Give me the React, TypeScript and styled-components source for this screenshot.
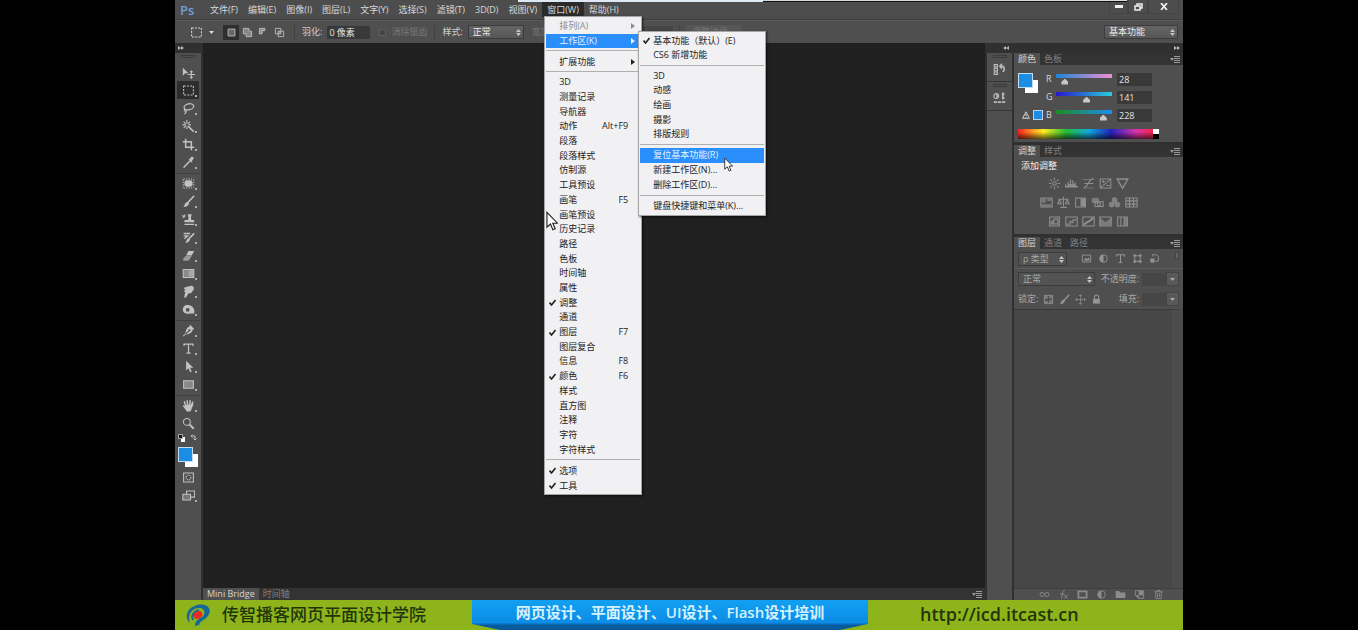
import React from "react";
import styled, { createGlobalStyle, css } from "styled-components";

const Global = createGlobalStyle`
  * { box-sizing: border-box; }
  body { margin: 0; background: #000; }
  body, button, input, select {
    font-family: "Open Sans", "Noto Sans CJK SC", sans-serif;
    font-size: 9px;
    line-height: 12px;
    color: #d8d8d8;
  }
  button, input, select { margin: 0; padding: 0; border: 0; background: none; }
  svg { display: block; flex: none; }
`;

/* ---------- icons ---------- */

const Svg = ({ size = 14, children }: { size?: number; children: React.ReactNode }) => (
  <svg width={size} height={size} viewBox="0 0 16 16" fill="none" stroke="currentColor" strokeWidth="1.3">
    {children}
  </svg>
);

const f = { fill: "currentColor", stroke: "none" };

const icons: Record<string, React.ReactNode> = {
  move: <><path {...f} d="M1 2v10l3-3h4z" /><path d="M11.500 6v9M7 10.500h9M10 7.500l1.500-1.500 1.500 1.500M10 13.500l1.500 1.500 1.500-1.500" /></>,
  marquee: <path strokeDasharray="2.500 1.500" d="M2 2.500h12v11H2z" />,
  lasso: <><ellipse cx="8.500" cy="6" rx="6" ry="3.700" strokeWidth="1.600" transform="rotate(-12 8 6)" /><path d="M4 8.500c-2 1-1.500 3 .5 2.500S5 13 3 15" /></>,
  wand: <><path strokeWidth="2" d="M7.500 7.500l7 7" /><path d="M6 0v4M6 8v3M0.500 6h4M8 6h3M2 2l3 3M10 2L7 5M2 10l3-3" /></>,
  crop: <path strokeWidth="1.800" d="M4.500 1v10.500H15M1 4.500h10.500V15" />,
  dropper: <><path {...f} d="M9 4l2-2.500c1-1 3.500-.5 3.500 1.500L12 6l1 1-1.500 1L8 4.500z" /><path strokeWidth="1.800" d="M9.500 6.500l-6 6L2 14.500" /></>,
  patch: <><rect {...f} x="3" y="4" width="10" height="8" rx="3" /><path strokeDasharray="1.500 1.500" d="M2 2.500h12M2 13.500h12M1.500 3v10M14.500 3v10" /></>,
  brush: <><path strokeWidth="2" d="M15 1L7 9.500" /><path {...f} d="M7 8.500l1.500 1.500c0 3-3 4.500-7.500 4.500 3-1 2-6 6-6z" /></>,
  stamp: <><path {...f} d="M7 1.500h5l-1 4 .5 3H15v3H3v-3h4.500l.5-3z" /><path d="M3 14h12M0 3l4 2M1 6l3-4" /></>,
  history: <><path strokeWidth="2" d="M15 3l-6 6" /><path {...f} d="M9 8.500l1 1.500c-1 3-3 4.500-6 4.500 2-1.500 1-5.500 5-6z" /><path d="M2 3h8M2 6h5L3 9.500" strokeWidth="1.700" /></>,
  eraser: <><path {...f} d="M8 2.500h7L12 8H5z" /><path {...f} opacity=".65" d="M4.500 8.500H12l-4 6H1.500V12z" /></>,
  gradient: <><rect {...f} x="1.500" y="3" width="13" height="10" opacity=".35" /><rect {...f} x="2" y="4" width="6" height="8" opacity=".25" /><rect {...f} x="8" y="4" width="6" height="8" opacity=".65" /><path d="M1.500 3h13v10h-13z" /></>,
  smudge: <path {...f} d="M3 3l8-2c3 0 4 2 3.500 4.500L11 10H8L5 15.500H2.500L4 9 2 7l3-1-2.500-1z" />,
  dodge: <path {...f} fillRule="evenodd" d="M1 8C1 1 11 1 14 6c2 3 1 6 1 7h-4C6 14 1 13 1 8zm4-1.500v4h4v-4z" />,
  pen: <><path {...f} d="M10 1l5 5-2 1c0 3-4 5.500-8 6l4-4a1.300 1.300 0 10-1-1l-4 4c.5-4 2-8 5-9z" /><path d="M1.500 15l3-3" /></>,
  type: <path strokeWidth="1.500" d="M2.500 5V2.500h11V5M8 2.500v11M5.500 13.800h5" />,
  arrow: <path {...f} d="M5 1v12l3-3 2 5 2-1-2-4.500h4z" />,
  rect: <><rect {...f} x="2" y="3.500" width="12" height="9" opacity=".5" /><path d="M2 3.500h12v9H2z" /></>,
  hand: <><path {...f} d="M4.500 10V7h7v-1l3-.5-2 5-2 5H6L1 8.500C1 7 3 8 4.500 10z" /><path strokeWidth="1.800" strokeLinecap="round" d="M4.500 9L3 3.500M7 8l-.7-6M9.500 8L10 2M11.800 8L13 4" /></>,
  zoom: <><circle cx="6" cy="6" r="4.200" /><path strokeWidth="2.400" d="M9.500 9.500l5 5" /></>,
  mask: <><path d="M2 2.500h12v11H2z" /><circle cx="8" cy="8" r="3" strokeDasharray="1.500 1" /></>,
  screen: <><path d="M5.500 2.500h10v7.500h-10z" /><path d="M1 6.500h9.500v7H1z" fill="#777" /></>,
  newSel: <><rect {...f} x="3" y="3" width="10" height="10" opacity=".4" /><path d="M3 3h10v10H3z" /></>,
  addSel: <><path {...f} opacity=".5" d="M2 2h8v4h4v8H6v-4H2z" /><path d="M2 2h8v4h4v8H6v-4H2z" /></>,
  subSel: <><path {...f} d="M2 2h8v4H6v4H2z" opacity=".6" /><path d="M2 2h8v3H6v5H2z" /></>,
  intSel: <><path d="M2 2h8v8H2zM6 6h8v8H6z" /><rect {...f} x="6" y="6" width="4" height="4" opacity=".5" /></>,
  sun: <><circle cx="8" cy="8" r="2.200" /><path d="M8 1v3M8 12v3M1 8h3M12 8h3M3 3l2 2M11 11l2 2M13 3l-2 2M5 11l-2 2" /></>,
  levels: <path {...f} d="M0 13V9h1.500v2H3V6h1.500v3H6V3h1.500v6H9V4h1.500v5H12V7h1.500v4H16v2z" />,
  curves: <><path d="M1 13.500h14M1 3h14" opacity=".6" /><path d="M2 13C8 13 7 3 14 2M3 8h11" /></>,
  exposure: <path d="M1.500 2.500h13v11h-13zM2 13L14 3M3.500 5.500h4M5.500 4v3M9 10.500h4" />,
  vibrance: <path d="M1.500 2.500h13L8 14z" strokeWidth="1.700" />,
  hue: <><path d="M1 2.500h14v11H1z" /><path {...f} d="M2 3h5v5H2zM9 3h5v3H9zM2 10h12v3H2z" opacity=".7" /></>,
  balance: <path d="M8 1v12M4 14h8M2 4h12M1 9.500l2-5 2.500 5zM10.500 9.500l2-5 2.500 5z" />,
  bw: <><path d="M2 2.500h12v11H2z" /><path {...f} d="M8 3h6v10H8z" /></>,
  photo: <><rect {...f} x="1" y="2" width="9" height="7" rx="2" opacity=".7" /><path d="M5 7h10v6H5z" /><circle cx="10" cy="10" r="2" /></>,
  mixer: <><circle {...f} cx="8" cy="5" r="3.500" opacity=".8" /><circle {...f} cx="4.500" cy="10.500" r="3.500" opacity=".8" /><circle {...f} cx="11.500" cy="10.500" r="3.500" opacity=".8" /></>,
  lookup: <path d="M1 2.500h14v11H1zM1 6h14M1 10h14M5.500 2.500v11M10.500 2.500v11" />,
  invert: <><path d="M2 2.500h12v11H2z" /><path {...f} fillRule="evenodd" d="M3 12V8L8 4h5v8zM8 6v4h3V6z" opacity=".8" /></>,
  poster: <><path d="M1 2.500h14v11H1z" /><path {...f} d="M2 13v-3h3V7h4V5h5v2h-3v3H7v3z" opacity=".7" /></>,
  threshold: <><path d="M1 2.500h14v11H1z" /><path strokeWidth="2.600" d="M2 12l4-3 4-2 4-4" /></>,
  selective: <><path d="M1 2.500h14v11H1z" /><path {...f} d="M1 3l7 6 7-6v10H1z" opacity=".7" /></>,
  gradmap: <><path d="M2 2.500h12v11H2zM6 3v10M10 3v10" /><path {...f} d="M10 3h4v10h-4z" opacity=".7" /></>,
  image: <><path d="M2 3h12v10H2z" /><path {...f} d="M4 11l3-4 2 2 2-3 2 5z" /></>,
  half: <><circle cx="8" cy="8" r="5.500" /><path {...f} d="M8 2.500a5.500 5.500 0 010 11z" transform="rotate(180 8 8)" /></>,
  shape: <><path d="M4 4h8v8H4z" /><path {...f} d="M2 2h4v3H2zM10 2h4v3h-4zM2 11h4v3H2zM10 11h4v3h-4z" /></>,
  smart: <><path d="M5 5V2.500h6l2.500 2.500v7H9" /><path {...f} d="M2 8h6v6H2z" /></>,
  grid: <><path d="M2 2h12v12H2z" /><path {...f} d="M3 3h4v4H3zM9 9h4v4H9zM9 3h4v3H9zM3 10h4v3H3z" opacity=".7" /></>,
  cross: <path strokeDasharray="3 1" d="M8 1v14M1 8h14M6 3l2-2 2 2M6 13l2 2 2-2M3 6L1 8l2 2M13 6l2 2-2 2" />,
  lock: <><rect {...f} x="3" y="7" width="10" height="7" /><path strokeWidth="1.600" d="M5 7V4.500a3 3 0 016 0V7" /></>,
  link: <><circle cx="4.500" cy="8" r="3" /><circle cx="11.500" cy="8" r="3" /></>,
  fx: <path d="M10 2C6 1 7 7 5 14M3 7h6M9 8l5 6M14 8l-5 6" />,
  maskAdd: <path strokeWidth="2.500" d="M2 3.500h12v9H2z" />,
  folder: <path {...f} d="M1 3h5l1.500 2H15v8H1z" />,
  page: <><path d="M2 2.500h12v11H7L2 9z" /><path {...f} d="M2 9h5v5zM7 3h6v6H7z" /></>,
  trash: <path d="M2 4h12M6 4V2h4v2M4 4v10h8V4M6.500 6v6M9.500 6v6" />,
  histPanel: <><path d="M1.500 2h4v3h-4zM1.500 6.500h4v3h-4zM1.500 11h4v3h-4z" /><path strokeWidth="2" d="M9 4h3c3 2 2 5 0 7M11 1L8.500 4 11 7" /></>,
  propPanel: <><circle cx="4" cy="5" r="3" /><path {...f} d="M4 2l3 3-3 3zM11 1h3v3h-1v2h1v3h-3z" /><path strokeWidth="2" strokeDasharray="4 1" d="M1 12.500h14" /></>,
};

const Icon = ({ name, size }: { name: string; size?: number }) => <Svg size={size}>{icons[name]}</Svg>;

/* ---------- shell ---------- */

const Page = styled.div`
  display: flex;
  flex-direction: column;
  min-height: 100vh;
  margin: 0 175px;
  background: #4f4f4f;
  position: relative;
`;

const BackWindow = styled.div`
  position: absolute;
  top: 0;
  left: 343px;
  right: 56px;
  height: 2px;
  display: flex;
  border-bottom: 1px solid #111;
  background: #d4dcd8;
  &::before { content: ""; width: 245px; height: 2px; background: #dfe9f6; }
`;

const MenuBar = styled.nav`
  display: flex;
  align-items: center;
  height: 20px;
  padding-left: 5px;
  background: #4d4d4d;
  border-bottom: 1px solid #3f3f3f;
`;

const Logo = styled.span`
  width: 25px;
  font-size: 13px;
  font-weight: 600;
  line-height: 18px;
  color: #6f9fdc;
`;

const MenuSlot = styled.div`position: relative;`;

const MenuButton = styled.button<{ $open?: boolean }>`
  height: 15px;
  padding: 0 5px;
  white-space: nowrap;
  background: ${(p) => (p.$open ? "#2b2b2b" : "none")};
`;

const WindowButtons = styled.div`
  display: flex;
  align-items: center;
  margin-left: auto;
  padding-right: 4px;
  color: #eee;
  align-self: flex-start;
`;

const WindowButton = styled.button<{ $w: number }>`
  display: flex;
  justify-content: center;
  align-items: center;
  width: ${(p) => p.$w}px;
  height: 14px;
  color: #eee;
  border: 1px solid #444;
  border-top: 0;
`;

const OptionsBar = styled.div`
  display: flex;
  align-items: center;
  height: 23px;
  padding: 0 5px 0 15px;
  background: #4f4f4f;
  border-top: 1px solid #595959;
  white-space: nowrap;
`;

const Mode = styled.button<{ $on?: boolean }>`
  display: flex;
  align-items: center;
  justify-content: center;
  width: 16px;
  height: 15px;
  color: #bdbdbd;
  background: ${(p) => (p.$on ? "#2e2e2e" : "none")};
`;

const Rule = styled.span<{ $m: number }>`
  width: 1px;
  height: 15px;
  margin: 0 ${(p) => p.$m}px;
  background: #424242;
`;

const Label = styled.label<{ $dim?: boolean; $end?: boolean }>`
  display: flex;
  align-items: center;
  gap: 5px;
  color: ${(p) => (p.$dim ? "#777" : "#d0d0d0")};
  white-space: nowrap;
  ${(p) => p.$end && css`margin-left: auto;`}
`;

const Field = styled.input<{ $w: number; $dim?: boolean }>`
  width: ${(p) => p.$w}px;
  height: 13px;
  padding: 0 2px;
  color: #e4e4e4;
  background: ${(p) => (p.$dim ? "#464646" : "#393939")};
`;

const Tick = styled.input`
  appearance: none;
  width: 7px;
  height: 7px;
  background: #444;
  border: 1px solid #5e5e5e;
`;

const SelectBox = styled.span<{ $w?: number; $dim?: boolean }>`
  position: relative;
  display: flex;
  ${(p) => (p.$w ? css`width: ${p.$w}px;` : css`flex: 1;`)}
  height: 14px;
  border: 1px solid #3c3c3c;
  background: ${(p) => (p.$dim ? "#535353" : "linear-gradient(#646464, #575757)")};
  select {
    appearance: none;
    width: 100%;
    padding-left: 4px;
    line-height: 12px;
    color: ${(p) => (p.$dim ? "#a8a8a8" : "#ededed")};
  }
  svg { position: absolute; right: 2px; top: 3px; color: #c4c4c4; }
`;

const Select = ({ label, value, w, dim }: { label: string; value: string; w?: number; dim?: boolean }) => (
  <SelectBox $w={w} $dim={dim}>
    <select aria-label={label} defaultValue={value}><option>{value}</option></select>
    <svg width="5" height="7" viewBox="0 0 5 7" fill="currentColor"><path d="M0 3l2.500-3L5 3zM0 4l2.500 3L5 4z" /></svg>
  </SelectBox>
);

const RefineButton = styled.button`
  width: 56px;
  height: 14px;
  color: #777;
  background: #575757;
`;

const Gap = styled.span<{ $w: number }>`flex: 0 0 ${(p) => p.$w}px;`;

const Workspace = styled.div`
  display: flex;
  flex: 1;
  background: #4f4f4f;
`;

/* ---------- tool box ---------- */

const Column = styled.div<{ $w: number }>`
  display: flex;
  flex-direction: column;
  width: ${(p) => p.$w}px;
  background: #4f4f4f;
  border-right: 2px solid #303030;
`;

const Collapse = styled.button<{ $left?: boolean }>`
  display: flex;
  align-items: center;
  justify-content: ${(p) => (p.$left ? "flex-start" : "flex-end")};
  width: 100%;
  height: 10px;
  padding: 0 3px;
  color: #b8b8b8;
  background: #303030;
`;

const Chevrons = ({ left }: { left?: boolean }) => (
  <svg width="6" height="4" viewBox="0 0 6 4" fill="currentColor">
    <path d={left ? "M3 0v4L0 2zM6 0v4L3 2z" : "M0 0v4l3-2zM3 0v4l3-2z"} />
  </svg>
);

const Grip = styled.div`
  width: 14px;
  height: 3px;
  margin: 2px auto 0;
  border: 1px solid #3b3b3b;
`;

const ToolGroup = styled.div`
  display: flex;
  flex-direction: column;
  margin: 0 1px;
  padding: 0 1px;
  & + & { margin-top: 2px; border-top: 1px solid #404040; }
`;

const Tool = styled.button<{ $on?: boolean; $plain?: boolean }>`
  position: relative;
  display: flex;
  align-items: center;
  justify-content: center;
  height: 18px;
  color: #c2c2c2;
  background: ${(p) => (p.$on ? "#2d2d2d" : "none")};
  ${(p) => !p.$plain && css`
    &::after {
      content: "";
      position: absolute;
      right: 2px;
      bottom: 2px;
      width: 2px;
      height: 2px;
      background: #b0b0b0;
    }
  `}
`;

const Spacer = styled.div<{ $h: number }>`flex: 0 0 ${(p) => p.$h}px;`;

const SwatchIcons = styled.div`
  display: flex;
  justify-content: space-between;
  height: 12px;
  padding: 2px 4px 0 3px;
  color: #c0c0c0;
`;

const Swatches = styled.div`
  position: relative;
  width: 20px;
  height: 20px;
  &::before, &::after { content: ""; position: absolute; width: 13px; height: 13px; }
  &::before { right: 0; bottom: 0; background: #fff; }
  &::after { left: 0; top: 0; background: #1c8de4; border: 1px solid #c4dcf0; }
`;

const SwatchPad = styled.div`padding: 3px 3px 1px; height: 24px;`;

/* ---------- canvas ---------- */

const Center = styled.main`
  display: flex;
  flex: 1;
  min-width: 0;
  flex-direction: column;
  background: #202020;
  border-right: 2px solid #303030;
`;

const Canvas = styled.div`flex: 1;`;

const TabStrip = styled.div`
  display: flex;
  align-items: stretch;
  height: 12px;
  padding-right: 3px;
  background: #333;
`;

const Tab = styled.button<{ $on?: boolean }>`
  height: 12px;
  padding: 0 4px;
  white-space: nowrap;
  line-height: 12px;
  color: ${(p) => (p.$on ? "#d6d6d6" : "#808080")};
  background: ${(p) => (p.$on ? "#4f4f4f" : "none")};
`;

const Flyout = styled.button`
  display: flex;
  align-items: center;
  margin-left: auto;
  color: #9a9a9a;
`;

const FlyoutMenu = () => (
  <Flyout aria-label="panel menu">
    <svg width="10" height="7" viewBox="0 0 10 7" fill="currentColor">
      <path d="M0 2h4L2 5zM4 0h6v1H4zM4 2h6v1H4zM4 4h6v1H4zM4 6h6v1H4z" />
    </svg>
  </Flyout>
);

/* ---------- panels ---------- */

const DockGroup = styled.div`
  height: 29px;
  border-bottom: 1px solid #383838;
  & > button { display: flex; width: 100%; justify-content: center; padding-top: 5px; color: #bcbcbc; }
`;

const Panels = styled.aside`
  display: flex;
  flex-direction: column;
  width: 169px;
`;

const Panel = styled.section<{ $fill?: boolean }>`
  display: flex;
  flex-direction: column;
  ${(p) => p.$fill && css`flex: 1;`}
  & + & { border-top: 3px solid #303030; }
`;

const ColorBody = styled.div`
  display: grid;
  grid-template-columns: 28px 10px 56px 35px;
  grid-auto-rows: 18px;
  align-items: center;
  padding: 5px 4px 0;
  height: 60px;
`;

const Fore = styled.div`grid-row: 1 / span 2; align-self: start; padding-top: 3px;`;

const Gamut = styled.div`
  grid-row: 3;
  grid-column: 1;
  display: flex;
  align-items: center;
  gap: 3px;
  padding-left: 4px;
  color: #d0d0d0;
  &::after { content: ""; width: 8px; height: 8px; background: #1c8de4; border: 1px solid #b8d4ea; }
`;

const Channel = styled.label<{ $row: number }>`grid-column: 2; grid-row: ${(p) => p.$row}; line-height: 12px;`;

const Slider = styled.input<{ $from: string; $to: string }>`
  appearance: none;
  width: 56px;
  height: 11px;
  &::-webkit-slider-runnable-track {
    height: 11px;
    background: linear-gradient(90deg, ${(p) => p.$from}, ${(p) => p.$to}) top / 100% 4px no-repeat;
  }
  &::-webkit-slider-thumb {
    appearance: none;
    width: 7px;
    height: 6px;
    margin-top: 5px;
    background: #c8c8c8;
    clip-path: polygon(50% 0, 100% 60%, 100% 100%, 0 100%, 0 60%);
  }
`;

const Value = styled.input`
  width: 35px;
  height: 13px;
  margin-left: 5px;
  padding-left: 2px;
  color: #e4e4e4;
  background: #393939;
`;

const Spectrum = styled.div`
  display: flex;
  height: 10px;
  margin: 4px 24px 3px 4px;
  background: linear-gradient(transparent 30%, rgba(0, 0, 0, 0.65)),
    linear-gradient(90deg, #f22, #fe2 18%, #2b3 34%, #1ad 50%, #22b 66%, #d3a 84%, #f22);
  &::after {
    content: "";
    width: 6px;
    margin-left: auto;
    background: linear-gradient(#fff 50%, #000 50%);
  }
`;

const AdjustBody = styled.div`
  height: 77px;
  padding: 3px 7px;
  color: #f0f0f0;
`;

const AdjustRow = styled.div`
  display: flex;
  justify-content: center;
  gap: 4px;
  height: 19px;
  padding: 3px 20px 0 0;
  button { color: #8f8f8f; }
`;

const LayerRow = styled.div<{ $line?: boolean }>`
  display: flex;
  align-items: center;
  height: 20px;
  padding: 0 4px;
  color: #a8a8a8;
  ${(p) => p.$line && css`border-bottom: 1px solid #5c5c5c;`}
`;

const IconRow = styled.div<{ $gap: number; $ml: number }>`
  display: flex;
  gap: ${(p) => p.$gap}px;
  margin-left: ${(p) => p.$ml}px;
  button { color: #949494; }
`;

const FilterToggle = styled.button`
  align-self: flex-start;
  width: 4px;
  height: 7px;
  margin: 3px 0 0 auto;
  background: #666;
  border: 1px solid #444;
`;

const Amount = styled.label`
  display: flex;
  align-items: center;
  gap: 3px;
  margin-left: auto;
  color: #a8a8a8;
`;

const Drop = styled.button`
  display: flex;
  align-items: center;
  justify-content: center;
  width: 13px;
  height: 14px;
  color: #aaa;
  border: 1px solid #444;
  background: #595959;
`;

const DropArrow = () => (
  <svg width="5" height="3" viewBox="0 0 5 3" fill="currentColor"><path d="M0 0h5L2.500 3z" /></svg>
);

const LayerList = styled.div`
  flex: 1;
  background: #474747;
  border-top: 1px solid #3a3a3a;
  border-right: 11px solid #4c4c4c;
`;

const PanelFooter = styled.div`
  display: flex;
  align-items: center;
  justify-content: center;
  gap: 8px;
  height: 12px;
  padding-left: 6px;
  border-top: 1px solid #3e3e3e;
  button { color: #8c8c8c; }
`;

/* ---------- pop-up menus ---------- */

const Popup = styled.div<{ $sub?: boolean }>`
  position: absolute;
  z-index: 2;
  top: ${(p) => (p.$sub ? "-3px" : "14px")};
  left: ${(p) => (p.$sub ? "92px" : "2px")};
  width: ${(p) => (p.$sub ? 128 : 98)}px;
  padding: 2px 1px 1px;
  background: #f1f0f2;
  border: 1px solid #a5a5a5;
  box-shadow: 1px 1px 2px rgba(0, 0, 0, 0.6);
`;

const Group = styled.div<{ $h: number }>`
  display: grid;
  grid-auto-rows: 1fr;
  height: ${(p) => p.$h}px;
`;

const Divider = styled.hr`
  height: 6px;
  margin: 0;
  border: 0;
  background: linear-gradient(#b0b0b0, #b0b0b0) 0 2px / 100% 1px no-repeat;
`;

const ItemSlot = styled.div`position: relative; display: grid;`;

const Item = styled.button<{ $hot?: boolean; $off?: boolean }>`
  position: relative;
  display: flex;
  align-items: center;
  justify-content: space-between;
  padding: 0 12px 0 13px;
  line-height: 12px;
  text-align: left;
  white-space: nowrap;
  color: ${(p) => (p.$hot ? "#e6f1ff" : p.$off ? "#8d8d8d" : "#222")};
  background: ${(p) => (p.$hot ? "#2a8ffb" : "none")};
`;

const CheckGlyph = styled.svg`position: absolute; left: 3px;`;
const SubGlyph = styled.svg`position: absolute; right: 5px;`;

type Entry = { t: string; key?: string; on?: boolean; sub?: boolean; hot?: boolean; off?: boolean; child?: React.ReactNode };

const CheckMark = () => (
  <CheckGlyph width="7" height="7" viewBox="0 0 7 7" fill="none" stroke="currentColor" strokeWidth="1.600"><path d="M.5 3.500L2.500 6 6.500 1" /></CheckGlyph>
);
const SubMark = () => (
  <SubGlyph width="4" height="6" viewBox="0 0 4 6" fill="currentColor"><path d="M0 0l4 3-4 3z" /></SubGlyph>
);

const Entries = ({ h, items }: { h: number; items: Entry[] }) => (
  <Group $h={h}>
    {items.map((e) => (
      <ItemSlot key={e.t}>
        <Item $hot={e.hot} $off={e.off}>
          {e.on && <CheckMark />}
          <span>{e.t}</span>
          {e.key && <span>{e.key}</span>}
          {e.sub && <SubMark />}
        </Item>
        {e.child}
      </ItemSlot>
    ))}
  </Group>
);

const Pointer = styled.svg<{ $x: number; $y: number }>`
  position: absolute;
  z-index: 4;
  left: ${(p) => p.$x}px;
  top: ${(p) => p.$y}px;
`;

const Cursor = ({ x, y, h }: { x: number; y: number; h: number }) => (
  <Pointer $x={x} $y={y} width={Math.round(h * 0.62)} height={h} viewBox="0 0 12.500 20" fill="#fff" stroke="#222" strokeWidth="1.200">
    <path d="M1 1v15.500l3.600-3.400 2.600 6 2.400-1-2.500-5.800h4.900z" />
  </Pointer>
);

const workspaceMenu = (
  <Popup $sub>
    <Entries h={29} items={[{ t: "基本功能（默认）(E)", on: true }, { t: "CS6 新增功能" }]} />
    <Divider />
    <Entries h={73} items={[{ t: "3D" }, { t: "动感" }, { t: "绘画" }, { t: "摄影" }, { t: "排版规则" }]} />
    <Divider />
    <Entries h={45} items={[{ t: "复位基本功能(R)", hot: true }, { t: "新建工作区(N)..." }, { t: "删除工作区(D)..." }]} />
    <Divider />
    <Entries h={15} items={[{ t: "键盘快捷键和菜单(K)..." }]} />
  </Popup>
);

const windowMenu = (
  <Popup>
    <Entries h={29} items={[{ t: "排列(A)", off: true, sub: true }, { t: "工作区(K)", hot: true, sub: true, child: workspaceMenu }]} />
    <Divider />
    <Entries h={15} items={[{ t: "扩展功能", sub: true }]} />
    <Divider />
    <Entries
      h={382}
      items={[
        { t: "3D" }, { t: "测量记录" }, { t: "导航器" }, { t: "动作", key: "Alt+F9" }, { t: "段落" }, { t: "段落样式" },
        { t: "仿制源" }, { t: "工具预设" }, { t: "画笔", key: "F5" }, { t: "画笔预设" }, { t: "历史记录" }, { t: "路径" },
        { t: "色板" }, { t: "时间轴" }, { t: "属性" }, { t: "调整", on: true }, { t: "通道" }, { t: "图层", on: true, key: "F7" },
        { t: "图层复合" }, { t: "信息", key: "F8" }, { t: "颜色", on: true, key: "F6" }, { t: "样式" }, { t: "直方图" },
        { t: "注释" }, { t: "字符" }, { t: "字符样式" },
      ]}
    />
    <Divider />
    <Entries h={30} items={[{ t: "选项", on: true }, { t: "工具", on: true }]} />
  </Popup>
);

/* ---------- banner ---------- */

const Banner = styled.footer`
  display: grid;
  grid-template-columns: 297fr 396fr 315fr;
  height: 30px;
  background: #8db51b;
  color: #22350c;
  white-space: nowrap;
`;

const School = styled.div`
  display: flex;
  align-items: center;
  gap: 11px;
  padding-left: 10px;
  font-size: 17px;
  font-weight: 500;
  line-height: 28px;
`;

const Ribbon = styled.div`
  text-align: center;
  font-size: 15px;
  font-weight: 600;
  line-height: 24px;
  color: #d4f2ff;
  background: linear-gradient(#12a0f2, #0c8ce6 75%, #075a9c 85%, #0a5a98);
  clip-path: polygon(0 0, 100% 0, 100% 80%, calc(100% - 28px) 100%, 28px 100%, 0 80%);
`;

const Site = styled.div`
  padding-left: 52px;
  a {
    color: inherit;
    text-decoration: none;
    font-size: 18px;
    font-weight: 600;
    line-height: 28px;
  }
`;

const tools = [
  ["move", "marquee", "lasso", "wand", "crop", "dropper"],
  ["patch", "brush", "stamp", "history", "eraser", "gradient", "smudge", "dodge"],
  ["pen", "type", "arrow", "rect"],
  ["hand", "zoom"],
];

const channels = [
  { n: "R", v: 28, from: "#1c86d4", to: "#f090d0" },
  { n: "G", v: 141, from: "#2a14d0", to: "#28d0d8" },
  { n: "B", v: 228, from: "#1c8d20", to: "#1c8df0" },
];

const adjustments = [
  ["sun", "levels", "curves", "exposure", "vibrance"],
  ["hue", "balance", "bw", "photo", "mixer", "lookup"],
  ["invert", "poster", "threshold", "selective", "gradmap"],
];

const IconButtons = ({ names, size }: { names: string[]; size: number }) => (
  <>{names.map((n) => <button key={n} aria-label={n}><Icon name={n} size={size} /></button>)}</>
);

export default function App() {
  return (
    <>
      <Global />
      <Page>
        <MenuBar>
          <Logo>Ps</Logo>
          {["文件(F)", "编辑(E)", "图像(I)", "图层(L)", "文字(Y)", "选择(S)", "滤镜(T)", "3D(D)", "视图(V)"].map((m) => (
            <MenuButton key={m}>{m}</MenuButton>
          ))}
          <MenuSlot>
            <MenuButton $open>窗口(W)</MenuButton>
            {windowMenu}
          </MenuSlot>
          <MenuButton>帮助(H)</MenuButton>
          <WindowButtons>
            <WindowButton $w={19} aria-label="minimize"><svg width="8" height="3"><path fill="currentColor" d="M0 0h8v3H0z" /></svg></WindowButton>
            <WindowButton $w={20} aria-label="restore"><svg width="9" height="8" viewBox="0 0 9 8" fill="none" stroke="currentColor" strokeWidth="1.500"><path d="M3 3V1h5v4H6M1 3h5v4H1z" /></svg></WindowButton>
            <WindowButton $w={31} aria-label="close"><svg width="8" height="7" viewBox="0 0 8 7" stroke="currentColor" strokeWidth="1.800"><path d="M1 0l6 7M7 0L1 7" /></svg></WindowButton>
          </WindowButtons>
        </MenuBar>
        <BackWindow />

        <OptionsBar>
          <Icon name="marquee" size={13} />
          <Gap $w={6} />
          <DropArrow />
          <Gap $w={9} />
          <Mode $on aria-label="new selection"><Icon name="newSel" size={11} /></Mode>
          <Mode aria-label="add"><Icon name="addSel" size={11} /></Mode>
          <Mode aria-label="subtract"><Icon name="subSel" size={11} /></Mode>
          <Mode aria-label="intersect"><Icon name="intSel" size={11} /></Mode>
          <Rule $m={7} />
          <Label>羽化: <Field $w={43} defaultValue="0 像素" /></Label>
          <Gap $w={9} />
          <Label $dim><Tick type="checkbox" disabled />消除锯齿</Label>
          <Rule $m={7} />
          <Label>样式:</Label>
          <Gap $w={5} />
          <Select label="样式" value="正常" w={56} />
          <Gap $w={8} />
          <Label $dim>宽度: <Field $w={43} $dim disabled /></Label>
          <Gap $w={4} />
          <Label $dim>高度: <Field $w={43} $dim disabled /></Label>
          <Rule $m={6} />
          <RefineButton disabled>调整边缘...</RefineButton>
          <Label $end><Select label="工作区" value="基本功能" w={74} /></Label>
        </OptionsBar>

        <Workspace>
          <Column $w={28}>
            <Collapse $left aria-label="expand tools"><Chevrons /></Collapse>
            <Grip />
            <Spacer $h={5} />
            {tools.map((g, i) => (
              <ToolGroup key={i}>
                {g.map((t) => (
                  <Tool key={t} $on={t === "marquee"} $plain={t === "move" || t === "zoom"} aria-label={t}>
                    <Icon name={t} size={13} />
                  </Tool>
                ))}
              </ToolGroup>
            ))}
            <SwatchIcons>
              <svg width="7" height="8" viewBox="0 0 7 8"><path fill="#fff" d="M3 3h4v5H3z" /><path fill="#111" stroke="#aaa" d="M.5.5h4v4h-4z" /></svg>
              <svg width="7" height="7" viewBox="0 0 7 7" fill="none" stroke="currentColor"><path d="M1 2h4v4M2.500.5L1 2l1.500 1.500M3.500 4.500L5 6l1.500-1.500" /></svg>
            </SwatchIcons>
            <SwatchPad><Swatches /></SwatchPad>
            <ToolGroup as="div">
              <Tool $plain aria-label="quick mask"><Icon name="mask" size={13} /></Tool>
              <Tool aria-label="screen mode"><Icon name="screen" size={13} /></Tool>
            </ToolGroup>
          </Column>

          <Center>
            <Canvas />
            <TabStrip>
              <Tab $on>Mini Bridge</Tab>
              <Tab>时间轴</Tab>
              <FlyoutMenu />
            </TabStrip>
          </Center>

          <Column $w={27}>
            <Collapse aria-label="expand dock"><Chevrons left /></Collapse>
            <DockGroup><Grip /><button aria-label="history"><Icon name="histPanel" size={13} /></button></DockGroup>
            <DockGroup><Grip /><button aria-label="properties"><Icon name="propPanel" size={13} /></button></DockGroup>
          </Column>

          <Panels>
            <Collapse aria-label="collapse panels"><Chevrons /></Collapse>
            <Panel>
              <TabStrip><Tab $on>颜色</Tab><Tab>色板</Tab><FlyoutMenu /></TabStrip>
              <ColorBody>
                <Fore><Swatches /></Fore>
                <Gamut>
                  <svg width="8" height="8" viewBox="0 0 8 8" fill="none" stroke="currentColor"><path d="M4 .8L7.400 7.300H.6zM4 3v2.200M4 5.800v1" /></svg>
                </Gamut>
                {channels.map((c, i) => (
                  <React.Fragment key={c.n}>
                    <Channel $row={i + 1} htmlFor={c.n}>{c.n}</Channel>
                    <Slider id={c.n} type="range" min={0} max={255} defaultValue={c.v} $from={c.from} $to={c.to} />
                    <Value aria-label={c.n} defaultValue={c.v} />
                  </React.Fragment>
                ))}
              </ColorBody>
              <Spectrum />
            </Panel>
            <Panel>
              <TabStrip><Tab $on>调整</Tab><Tab>样式</Tab><FlyoutMenu /></TabStrip>
              <AdjustBody>
                添加调整
                {adjustments.map((r, i) => (
                  <AdjustRow key={i}><IconButtons names={r} size={13} /></AdjustRow>
                ))}
              </AdjustBody>
            </Panel>
            <Panel $fill>
              <TabStrip><Tab $on>图层</Tab><Tab>通道</Tab><Tab>路径</Tab><FlyoutMenu /></TabStrip>
              <LayerRow $line>
                <Select label="类型" value="ρ 类型" w={49} dim />
                <IconRow $gap={6} $ml={14}><IconButtons names={["image", "half", "type", "shape", "smart"]} size={11} /></IconRow>
                <FilterToggle aria-label="filter toggle" />
              </LayerRow>
              <LayerRow>
                <Select label="混合模式" value="正常" w={77} dim />
                <Amount>不透明度: <Field $w={24} $dim /></Amount>
                <Drop aria-label="opacity"><DropArrow /></Drop>
              </LayerRow>
              <LayerRow>
                锁定:
                <IconRow $gap={5} $ml={5}><IconButtons names={["grid", "brush", "cross", "lock"]} size={11} /></IconRow>
                <Amount>填充: <Field $w={24} $dim /></Amount>
                <Drop aria-label="fill"><DropArrow /></Drop>
              </LayerRow>
              <LayerList />
              <PanelFooter><IconButtons names={["link", "fx", "maskAdd", "half", "folder", "page", "trash"]} size={11} /></PanelFooter>
            </Panel>
          </Panels>
        </Workspace>

        <Banner>
          <School>
            <svg width="26" height="24" viewBox="0 0 26 24" fill="none">
              <path fill="#17689a" d="M5 20C-2 14 3 4 12 2c10-2 16 4 11 11-3 4-7 4-9 9l-4 1c0-5 3-7 7-9 4-3 3-9-3-9C7 5 2 12 5 20z" />
              <path stroke="#17689a" strokeWidth="2" d="M8 17c-2-5 1-9 6-10" />
              <ellipse cx="13" cy="12" rx="4.500" ry="3.500" fill="#ec2a1c" transform="rotate(-25 13 12)" />
            </svg>
            传智播客网页平面设计学院
          </School>
          <Ribbon>网页设计、平面设计、UI设计、Flash设计培训</Ribbon>
          <Site><a href="http://icd.itcast.cn">http://icd.itcast.cn</a></Site>
        </Banner>
        <Cursor x={371} y={211} h={20} />
        <Cursor x={549} y={157} h={15} />
      </Page>
    </>
  );
}
